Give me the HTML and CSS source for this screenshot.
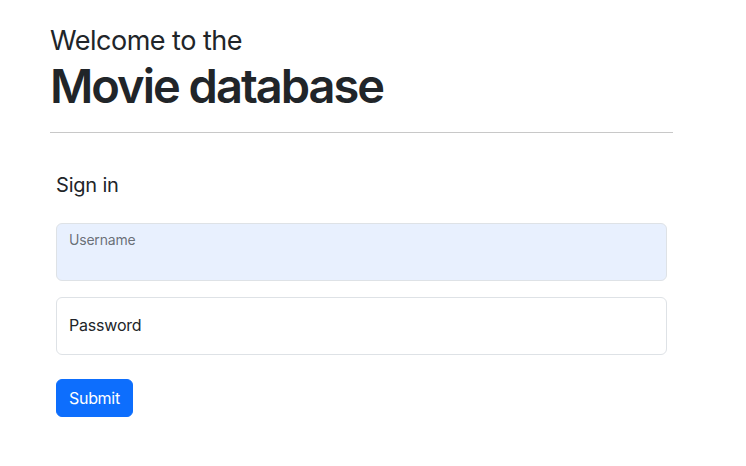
FILE: index.html
```html
<!DOCTYPE html>
<html lang="en">
<head>
<meta charset="utf-8">
<title>Movie database</title>
<link rel="stylesheet" href="styles.css">
</head>
<body>
<main class="container">
  <header class="hero">
    <div class="welcome">Welcome to the</div>
    <h1 class="title">Movie database</h1>
  </header>
  <hr class="divider">
  <form class="signin">
    <h2 class="signin-title">Sign in</h2>
    <div class="field filled">
      <input class="field-input" type="text" id="username">
      <label class="field-label" for="username">Username</label>
    </div>
    <div class="field">
      <input class="field-input" type="password" id="password">
      <label class="field-label" for="password">Password</label>
    </div>
    <button class="btn" type="button">Submit</button>
  </form>
</main>
</body>
</html>
```
FILE: styles.css
```css
* { box-sizing: border-box; }
html, body { margin: 0; padding: 0; background: #fff; }
body {
  font-family: Inter, "Noto Sans", sans-serif;
  color: #212529;
  font-size: 16px;
}
.container {
  width: 623px;
  margin-left: 50px;
  padding-top: 24px;
}
.hero { display: flex; flex-direction: column; }
.welcome {
  font-size: 27px;
  line-height: 34px;
  font-weight: 400;
  letter-spacing: -0.5px;
}
.title {
  margin: 0;
  font-size: 47px;
  line-height: 56px;
  font-weight: 600;
  letter-spacing: -2px;
}
.divider {
  margin: 18px 0 0;
  border: 0;
  border-top: 1px solid #c8c8c8;
}
.signin {
  padding: 40px 6px 0;
  display: flex;
  flex-direction: column;
  align-items: flex-start;
}
.signin-title {
  margin: 0 0 26px;
  font-size: 20px;
  line-height: 24px;
  font-weight: 400;
  letter-spacing: -0.2px;
}
.field {
  position: relative;
  width: 100%;
  height: 58px;
  margin-bottom: 16px;
}
.field-input {
  width: 100%;
  height: 58px;
  border: 1px solid #dee2e6;
  border-radius: 6px;
  background: #fff;
  font: inherit;
  padding: 0 12px;
}
.filled .field-input { background: #e8f0fe; }
.field-label {
  position: absolute;
  left: 13px;
  top: 18px;
  font-size: 16px;
  line-height: 20px;
  color: #212529;
  letter-spacing: -0.2px;
}
.filled .field-label {
  top: 9px;
  font-size: 14px;
  line-height: 16px;
  color: rgba(33,37,41,.65);
}
.btn {
  margin-top: 8px;
  height: 38px;
  padding: 0 12px;
  background: #0d6efd;
  border: 1px solid #0d6efd;
  border-radius: 6px;
  color: #fff;
  font: inherit;
  font-size: 16px;
  letter-spacing: -0.3px;
}
```
